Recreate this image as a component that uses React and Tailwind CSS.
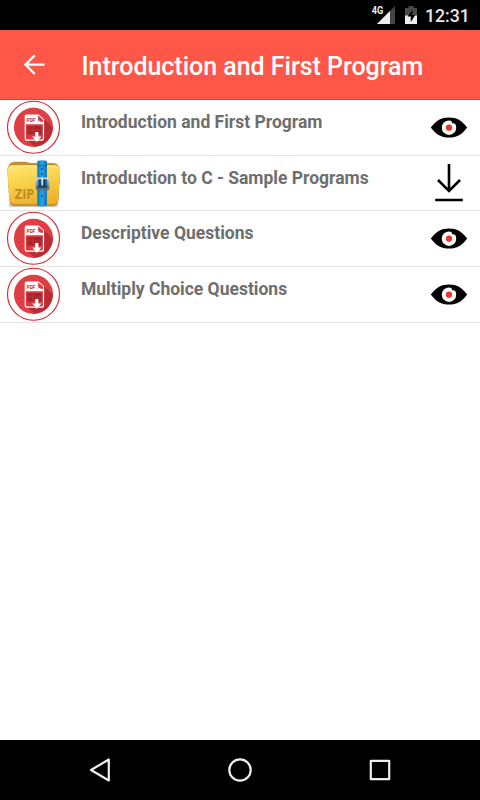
const items = [
  { title: 'Introduction and First Program', type: 'pdf', height: 'h-14' },
  { title: 'Introduction to C - Sample Programs', type: 'zip', height: 'h-[55px]' },
  { title: 'Descriptive Questions', type: 'pdf', height: 'h-14' },
  { title: 'Multiply Choice Questions', type: 'pdf', height: 'h-14' },
]

function PdfIcon() {
  return (
    <svg width="55" height="54" viewBox="0 0 55 54" className="block">
      <circle cx="27.5" cy="27.3" r="26" fill="#fff" stroke="#d2252b" strokeWidth="1.1" />
      <circle cx="27.5" cy="27.3" r="19.6" fill="#df3e44" />
      <path d="M37 18l9.6 9.5A19.6 19.6 0 0 1 29 46.8L20 39z" fill="#b92c33" />
      <path d="M20.300 15h12.200l5 4.500v18.700a2 2 0 0 1-2 2H21.300a2 2 0 0 1-2-2V16a1 1 0 0 1 1-1z" fill="#d9393f" stroke="#fff" strokeWidth="1.200" />
      <path d="M19.300 15h11.700v6.500l7 1.200v1.600H19.300z" fill="#fff" />
      <path d="M32 15.600v3.600c0 1.800 1.200 2.700 4.800 2.700v-2.400z" fill="#dc3a40" />
      <path d="M31.500 15v4.500c0 2 1.500 3 6 3" fill="none" stroke="#fff" strokeWidth="1.200" />
      <path d="M21.300 26h14.200v8.500H21.300z" fill="#a9242b" />
      <path d="M21.300 30.200h14.200M27 26v8.500" stroke="#cf3a41" strokeWidth="0.600" />
      <path d="M29.200 32h3.200v4.600h3l-4.600 5.400-4.600-5.400h3z" fill="#fff" />
      <text x="20.500" y="21.700" fontSize="4.900" fontWeight="700" textLength="9" lengthAdjust="spacingAndGlyphs" fill="#c92f36" className="font-['Roboto',sans-serif]">PDF</text>
    </svg>
  )
}

function ZipIcon() {
  return (
    <svg width="55" height="54" viewBox="0 0 55 54" className="block">
      <defs>
        <linearGradient id="folder" x1="0.1" y1="0" x2="0.4" y2="1">
          <stop offset="0" stopColor="#ffe66e" />
          <stop offset="0.5" stopColor="#f8d148" />
          <stop offset="1" stopColor="#ecb22e" />
        </linearGradient>
        <linearGradient id="strap" x1="0" y1="0" x2="1" y2="0">
          <stop offset="0" stopColor="#0a78c4" />
          <stop offset="0.5" stopColor="#2ba6ea" />
          <stop offset="1" stopColor="#0a70b8" />
        </linearGradient>
        <linearGradient id="buckle" x1="0" y1="0" x2="0" y2="1">
          <stop offset="0" stopColor="#c9d4dc" />
          <stop offset="1" stopColor="#5b6c7a" />
        </linearGradient>
      </defs>
      <rect x="3" y="46.500" width="49" height="4.500" rx="2.200" fill="#c9c4b8" />
      <path d="M1.500 15c0-5 2.500-9.300 7-9.300h10.500c3 0 3.500 1.300 6 1.300H47c4.300 0 6.800 3 7 8z" fill="#c2912c" />
      <path d="M1.500 16.500c-.2-5 1.400-7.300 5.400-7.300H48.500c4.200 0 5.800 2.300 5.600 7.300l-1.600 26.500c-.3 4.500-2.300 6.800-6.600 6.800H9.800c-4.300 0-6.200-2.300-6.600-6.800z" fill="#bd8220" />
      <path d="M1.500 15.500c-.2-4 1.400-6.300 5.400-6.300H48.500c4.200 0 5.800 2.300 5.600 6.300l-1.600 26.300c-.3 4.300-2.300 6.500-6.600 6.500H9.800c-4.300 0-6.200-2.200-6.600-6.500z" fill="url(#folder)" />
      <path d="M3.300 13c.5-2 1.900-2.800 4-2.800h40.500c2.500 0 4 .8 4.500 2.800" fill="none" stroke="#fff0a0" strokeWidth="0.800" />
      <path d="M31.300 5q4.800-1.400 9.600 0v44.500q-4.800 2-9.600 0z" fill="url(#strap)" />
      <path d="M31.300 9.800h9.600" stroke="#075a91" strokeWidth="0.800" />
      <circle cx="36" cy="13" r="1" fill="#075a91" />
      <circle cx="36" cy="18" r="1" fill="#075a91" />
      <circle cx="36" cy="40" r="1" fill="#075a91" />
      <rect x="30.700" y="22.500" width="11.600" height="10.800" rx="1.500" fill="#1268a4" stroke="url(#buckle)" strokeWidth="2.200" />
      <path d="M31.800 30.500h9.400" stroke="#123f60" strokeWidth="2" />
      <path d="M34 23v5.500h4.500V23" fill="none" stroke="#123f60" strokeWidth="1" />
      <path d="M36.200 21.500v8" stroke="#dce7ec" strokeWidth="1.600" />
      <text x="8.800" y="43.400" fontSize="14" fontWeight="700" textLength="19.500" lengthAdjust="spacingAndGlyphs" fill="#bf8a28" className="font-['Open_Sans',sans-serif]">ZIP</text>
    </svg>
  )
}

function EyeIcon() {
  return (
    <svg width="38" height="22" viewBox="0 0 38 22" className="block">
      <path d="M.8 10.500C6.500 3.200 11 .4 19 .4S31.500 3.200 37.200 10.500C31.500 17.800 27 20.600 19 20.600S6.500 17.800.8 10.500z" fill="#000" />
      <circle cx="19" cy="10.700" r="7.200" fill="#fff" />
      <path d="M21 2.500l5 3-1.500 1.200-1.300-.8-1 .6z" fill="#000" />
      <circle cx="19" cy="10.700" r="3.100" fill="#f23329" />
    </svg>
  )
}

function DownloadIcon() {
  return (
    <svg width="38" height="40" viewBox="0 0 38 40" className="block" fill="none" stroke="#000" strokeWidth="2.600">
      <path d="M19 1v27.500M8 17l11 11 11-11M5.200 37h27.600" />
    </svg>
  )
}

function StatusBar() {
  return (
    <div className="flex h-[30px] items-center bg-black pl-[371px] text-[#e8e8e8]">
      <svg width="24" height="30" viewBox="0 0 24 30" className="block">
        <path d="M24 6v18H6z" fill="#444" />
        <path d="M19 11v13H6z" fill="#eee" />
        <path d="M0 4h13.500v10.500H0z" fill="#000" />
        <text x="0.8" y="14" fontSize="10" fontWeight="700" textLength="11.500" lengthAdjust="spacingAndGlyphs" fill="#eee" className="font-['Roboto',sans-serif]">4G</text>
      </svg>
      <svg width="12" height="30" viewBox="0 0 12 30" className="ml-[10px] block">
        <path d="M0 8h3.500V6h5v2H12v8H0z" fill="#484848" />
        <path d="M0 15.500h12V24H0z" fill="#eee" />
        <path d="M8 9.500L2.500 16.500h3.300V22l4.500-7H7z" fill="#000" />
      </svg>
      <span className="ml-[8px] pt-[2px] text-[17.700px] leading-[28px] font-medium">12:31</span>
    </div>
  )
}

function Row({ title, type, height }) {
  return (
    <div className={`flex ${height} border-b border-[#e4e4e4] pr-3 pl-[6px]`}>
      <div className="w-[55px] shrink-0">
        {type === 'pdf' ? <PdfIcon /> : <ZipIcon />}
      </div>
      <p className="ml-5 flex-1 pt-[10px] text-[17.500px] leading-6 font-bold whitespace-nowrap text-[#6e6e6e]">{title}</p>
      <div className="flex w-[38px] items-center">
        {type === 'pdf' ? <EyeIcon /> : <DownloadIcon />}
      </div>
    </div>
  )
}

function NavBar() {
  return (
    <div className="flex h-[60px] items-center justify-between bg-black px-[88px]">
      <svg width="24" height="24" viewBox="0 0 24 24" fill="none" stroke="#eee" strokeWidth="2.200" strokeLinejoin="round">
        <path d="M20.800 1.500v21L3 12z" />
      </svg>
      <svg width="24" height="24" viewBox="0 0 24 24" fill="none" stroke="#eee" strokeWidth="2.200">
        <circle cx="12" cy="12" r="10.700" />
      </svg>
      <svg width="24" height="24" viewBox="0 0 24 24" fill="none" stroke="#eee" strokeWidth="2.200" strokeLinejoin="round">
        <path d="M2.800 2.800h18.400v18.400H2.800z" />
      </svg>
    </div>
  )
}

function App() {
  return (
    <div className="flex h-[800px] w-[480px] flex-col bg-white font-['Roboto',sans-serif]">
      <StatusBar />
      <header className="flex h-[70px] items-center border-b border-[#f83a1c] bg-[#ff5747] pl-6 text-white">
        <svg width="22" height="22" viewBox="0 0 22 22" fill="none" stroke="#fff" strokeWidth="2.300">
          <path d="M20.500 10.700H2M10.800 1.300L1.500 10.700l9.300 9.300" />
        </svg>
        <h1 className="ml-[35.500px] pt-[5px] text-[24.950px] font-medium whitespace-nowrap">Introduction and First Program</h1>
      </header>
      <main className="flex-1">
        {items.map((item) => (
          <Row key={item.title} {...item} />
        ))}
      </main>
      <NavBar />
    </div>
  )
}

export default App
